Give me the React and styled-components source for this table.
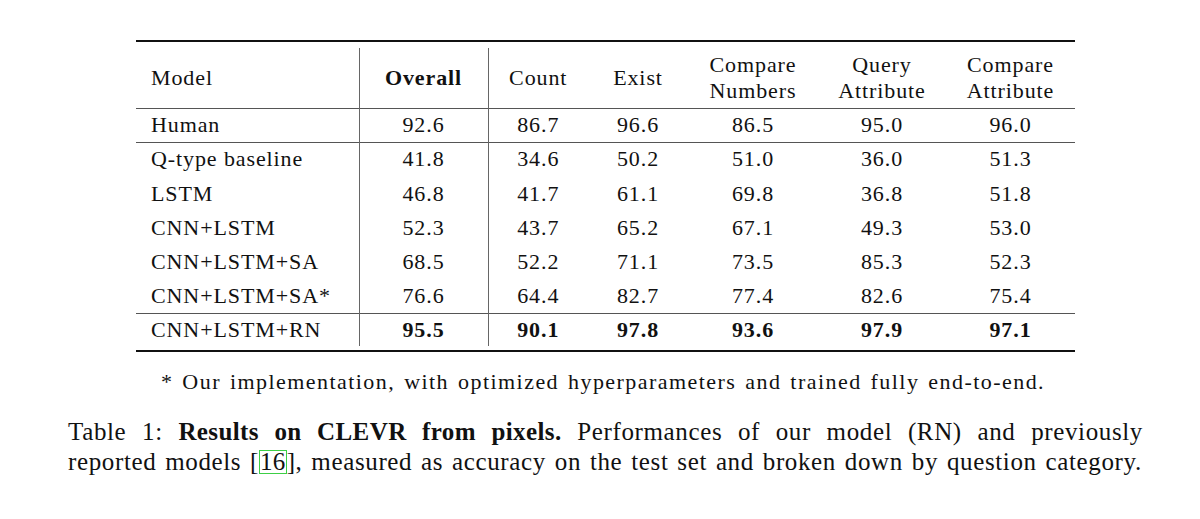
import React from 'react';
import styled, { createGlobalStyle } from 'styled-components';

const GlobalStyle = createGlobalStyle`
    body {
        margin: 0;
        background: #ffffff;
        color: #111111;
        font-family: "Liberation Serif", "DejaVu Serif", serif;
    }
`

const Page = styled.div`
    width: 1200px;
    height: 519px;
    padding-top: 40px;
    box-sizing: border-box;
    overflow: hidden;
`
const TableFrame = styled.div`
    margin-left: 136px;
    width: 939px;
    border-top: 2px solid #111;
    border-bottom: 2px solid #111;
    padding: 6px 0 4px;
`
const Table = styled.table`
    width: 100%;
    border-collapse: collapse;
    table-layout: fixed;
    font-family: inherit;
    font-size: 22px;
    letter-spacing: 0.9px;
`
const Row = styled.tr`
    height: ${p => p.$h}px;
    border-top: ${p => p.$rule ? '1px solid #555' : 'none'};
`
const Cell = styled.td`
    padding: 0;
    text-align: ${p => p.$left ? 'left' : 'center'};
    padding-left: ${p => p.$left ? '15px' : '0'};
    font-weight: ${p => p.$bold ? 'bold' : 'normal'};
    border-right: ${p => p.$divider ? '1px solid #666' : 'none'};
    line-height: 26px;
    white-space: nowrap;
    vertical-align: middle;
`
const Footnote = styled.div`
    margin-top: 18px;
    text-align: center;
    font-size: 22px;
    letter-spacing: 1.45px;
    word-spacing: 2px;
    line-height: 24px;
    padding-left: 6px;
    white-space: nowrap;
`
const Caption = styled.div`
    margin: 23px 0 0 68px;
    width: 1075px;
    font-size: 25px;
    line-height: 30px;
    letter-spacing: 0.63px;
    word-spacing: 2px;
`
const CaptionLine = styled.div`
    text-align: ${p => p.$justify ? 'justify' : 'left'};
    text-align-last: ${p => p.$justify ? 'justify' : 'left'};
    white-space: nowrap;
`
const Bold = styled.b`
    letter-spacing: 0.4px;
`
const Cite = styled.span`
    border: 1px solid #3ccf45;
    padding: 0;
    line-height: 22px;
    display: inline-block;
    letter-spacing: 0.3px;
`

const widths = [223, 129, 100, 100, 130, 128, 129];

const header = [
    ['Model'],
    ['Overall'],
    ['Count'],
    ['Exist'],
    ['Compare', 'Numbers'],
    ['Query', 'Attribute'],
    ['Compare', 'Attribute'],
];

const rows = [
    { name: 'Human', vals: ['92.6', '86.7', '96.6', '86.5', '95.0', '96.0'], h: 34 },
    { name: 'Q-type baseline', vals: ['41.8', '34.6', '50.2', '51.0', '36.0', '51.3'], h: 34, rule: true },
    { name: 'LSTM', vals: ['46.8', '41.7', '61.1', '69.8', '36.8', '51.8'], h: 35 },
    { name: 'CNN+LSTM', vals: ['52.3', '43.7', '65.2', '67.1', '49.3', '53.0'], h: 34 },
    { name: 'CNN+LSTM+SA', vals: ['68.5', '52.2', '71.1', '73.5', '85.3', '52.3'], h: 34 },
    { name: 'CNN+LSTM+SA*', vals: ['76.6', '64.4', '82.7', '77.4', '82.6', '75.4'], h: 34 },
    { name: 'CNN+LSTM+RN', vals: ['95.5', '90.1', '97.8', '93.6', '97.9', '97.1'], h: 33, rule: true, bold: true },
];

const App = () => {
    return (
        <Page>
            <GlobalStyle />
            <TableFrame>
                <Table>
                    <colgroup>
                        {widths.map((w, i) => <col key={i} style={{ width: w }} />)}
                    </colgroup>
                    <tbody>
                        <Row $h={60}>
                            {header.map((lines, i) => (
                                <Cell key={i} $left={i === 0} $bold={i === 1} $divider={i < 2}>
                                    {lines.map((l, j) => <div key={j}>{l}</div>)}
                                </Cell>
                            ))}
                        </Row>
                        {rows.map((r) => (
                            <Row key={r.name} $h={r.h} $rule={r.name === 'Human' || r.rule}>
                                <Cell $left $divider>{r.name}</Cell>
                                {r.vals.map((v, i) => (
                                    <Cell key={i} $bold={r.bold} $divider={i === 0}>{v}</Cell>
                                ))}
                            </Row>
                        ))}
                    </tbody>
                </Table>
            </TableFrame>
            <Footnote>* Our implementation, with optimized hyperparameters and trained fully end-to-end.</Footnote>
            <Caption>
                <CaptionLine $justify>
                    Table 1: <Bold>Results on CLEVR from pixels.</Bold> Performances of our model (RN) and previously
                </CaptionLine>
                <CaptionLine>
                    reported models [<Cite>16</Cite>], measured as accuracy on the test set and broken down by question category.
                </CaptionLine>
            </Caption>
        </Page>
    )
}

export default App;
